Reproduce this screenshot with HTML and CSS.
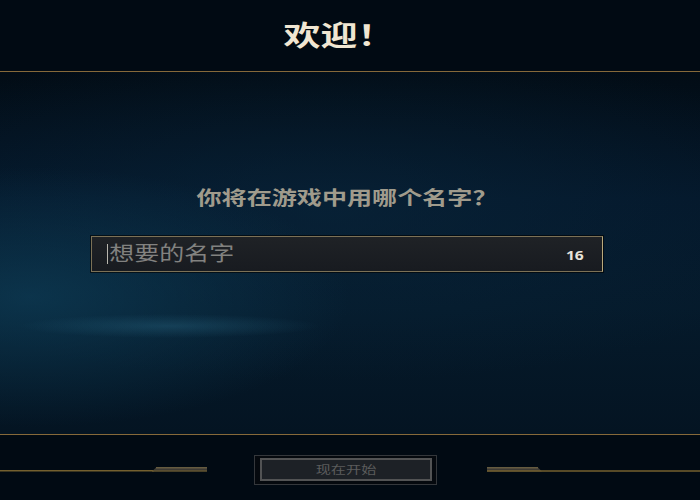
FILE: index.html
```html
<!DOCTYPE html>
<html lang="zh">
<head>
<meta charset="utf-8">
<title>欢迎</title>
<link rel="stylesheet" href="styles.css">
</head>
<body>
<div class="screen">
  <header class="header">
    <h1 class="title"><span class="stretch-title">欢迎！</span></h1>
  </header>
  <main class="main">
    <div class="form">
      <p class="question"><span class="stretch">你将在游戏中用哪个名字？</span></p>
      <div class="field">
        <span class="caret"></span>
        <span class="placeholder">想要的名字</span>
        <span class="count">16</span>
      </div>
    </div>
  </main>
  <footer class="footer">
    <svg class="rail rail-left" width="207" height="8" viewBox="0 0 207 8">
      <line x1="0" y1="4.8" x2="154" y2="4.8" stroke="#74602f" stroke-width="1.5"/>
      <polygon points="152,5.4 156,1.5 207,1.5 207,5.4" fill="#3c3a34"/>
      <line x1="156" y1="1.8" x2="207" y2="1.8" stroke="#84744e" stroke-width="1"/>
      <line x1="152" y1="5" x2="207" y2="5" stroke="#74602f" stroke-width="1.2"/>
    </svg>
    <div class="btn-frame">
      <button class="btn" type="button"><span class="stretch">现在开始</span></button>
    </div>
    <svg class="rail rail-right" width="213" height="8" viewBox="0 0 213 8">
      <polygon points="0,1.5 51,1.5 55,5.4 0,5.4" fill="#3c3a34"/>
      <line x1="0" y1="1.8" x2="51" y2="1.8" stroke="#84744e" stroke-width="1"/>
      <line x1="0" y1="5" x2="213" y2="5" stroke="#74602f" stroke-width="1.5"/>
    </svg>
  </footer>
</div>
</body>
</html>
```
FILE: styles.css
```css
html, body {
  margin: 0;
  padding: 0;
  background: #010a13;
}

.screen {
  width: 700px;
  height: 500px;
  overflow: hidden;
  display: flex;
  flex-direction: column;
  font-family: "Noto Sans CJK SC", "Noto Sans", sans-serif;
  background: #010a13;
}

.stretch {
  display: inline-block;
  transform: scaleX(1.32);
  transform-origin: center;
}

.stretch-title {
  display: inline-block;
  transform: scaleX(1.32);
  transform-origin: center;
}

.header {
  height: 71px;
  flex: none;
  display: flex;
  align-items: center;
  justify-content: center;
  padding-right: 22px;
  border-bottom: 1px solid #86693a;
  box-sizing: content-box;
}

.title {
  margin: 0;
  padding-bottom: 4px;
  font-size: 28px;
  line-height: 28px;
  font-weight: 700;
  color: #f0e6d2;
  letter-spacing: 0;
}

.main {
  height: 362px;
  flex: none;
  border-bottom: 1px solid #86693a;
  background:
    radial-gradient(ellipse 150px 12px at 170px 254px, rgba(50, 120, 150, 0.3), rgba(50,120,150,0) 100%),
    radial-gradient(ellipse 320px 130px at 30px 225px, rgba(14, 62, 88, 0.7), rgba(14,62,88,0) 100%),
    radial-gradient(ellipse 520px 170px at 330px 140px, rgba(10, 40, 62, 0.55), rgba(10,40,62,0) 100%),
    linear-gradient(180deg, #020c15 0%, #04172a 35%, #051a2b 65%, #041422 100%);
}

.form {
  width: 512px;
  margin-left: 91px;
  padding-top: 115px;
  display: flex;
  flex-direction: column;
}

.question {
  margin: 0;
  text-align: center;
  font-size: 19px;
  line-height: 19px;
  font-weight: 700;
  color: #a09b8c;
}

.field {
  margin-top: 30px;
  height: 34px;
  display: flex;
  align-items: center;
  padding: 0 18px 0 15px;
  border: 1px solid #7c7156;
  border-right-color: #b9a97c;
  background: linear-gradient(180deg, #1f2226 0%, #181b20 100%);
  box-shadow: 0 0 0 1px rgba(0, 0, 0, 0.6);
}

.caret {
  width: 1px;
  height: 20px;
  background: #b8b6ae;
  flex: none;
}

.placeholder {
  flex: 1;
  font-size: 20px;
  line-height: 20px;
  color: #828280;
  transform: scaleX(1.25);
  transform-origin: left center;
  padding-left: 1px;
  margin-bottom: 2px;
}

.count {
  font-family: "Open Sans", "Noto Sans", sans-serif;
  font-size: 12px;
  font-weight: 700;
  color: #e8e4da;
  transform: scaleX(1.3);
  transform-origin: right center;
  margin-top: 2px;
}

.footer {
  flex: 1;
  display: flex;
  align-items: center;
  padding-top: 5px;
}

.rail {
  display: block;
  flex: none;
}

.rail-left {
  margin-right: 47px;
}

.rail-right {
  margin-left: 50px;
}

.btn-frame {
  width: 183px;
  height: 30px;
  box-sizing: border-box;
  border: 1px solid #34373b;
  background: #05090e;
  padding: 2px 4px 2px 5px;
  display: flex;
}

.btn {
  flex: 1;
  margin: 0;
  height: 23px;
  border: 2px solid #525354;
  background: #1d2126;
  color: #5b5c5c;
  font-family: "Noto Sans CJK SC", sans-serif;
  font-size: 11.5px;
  line-height: 17px;
  padding: 0;
}
```
